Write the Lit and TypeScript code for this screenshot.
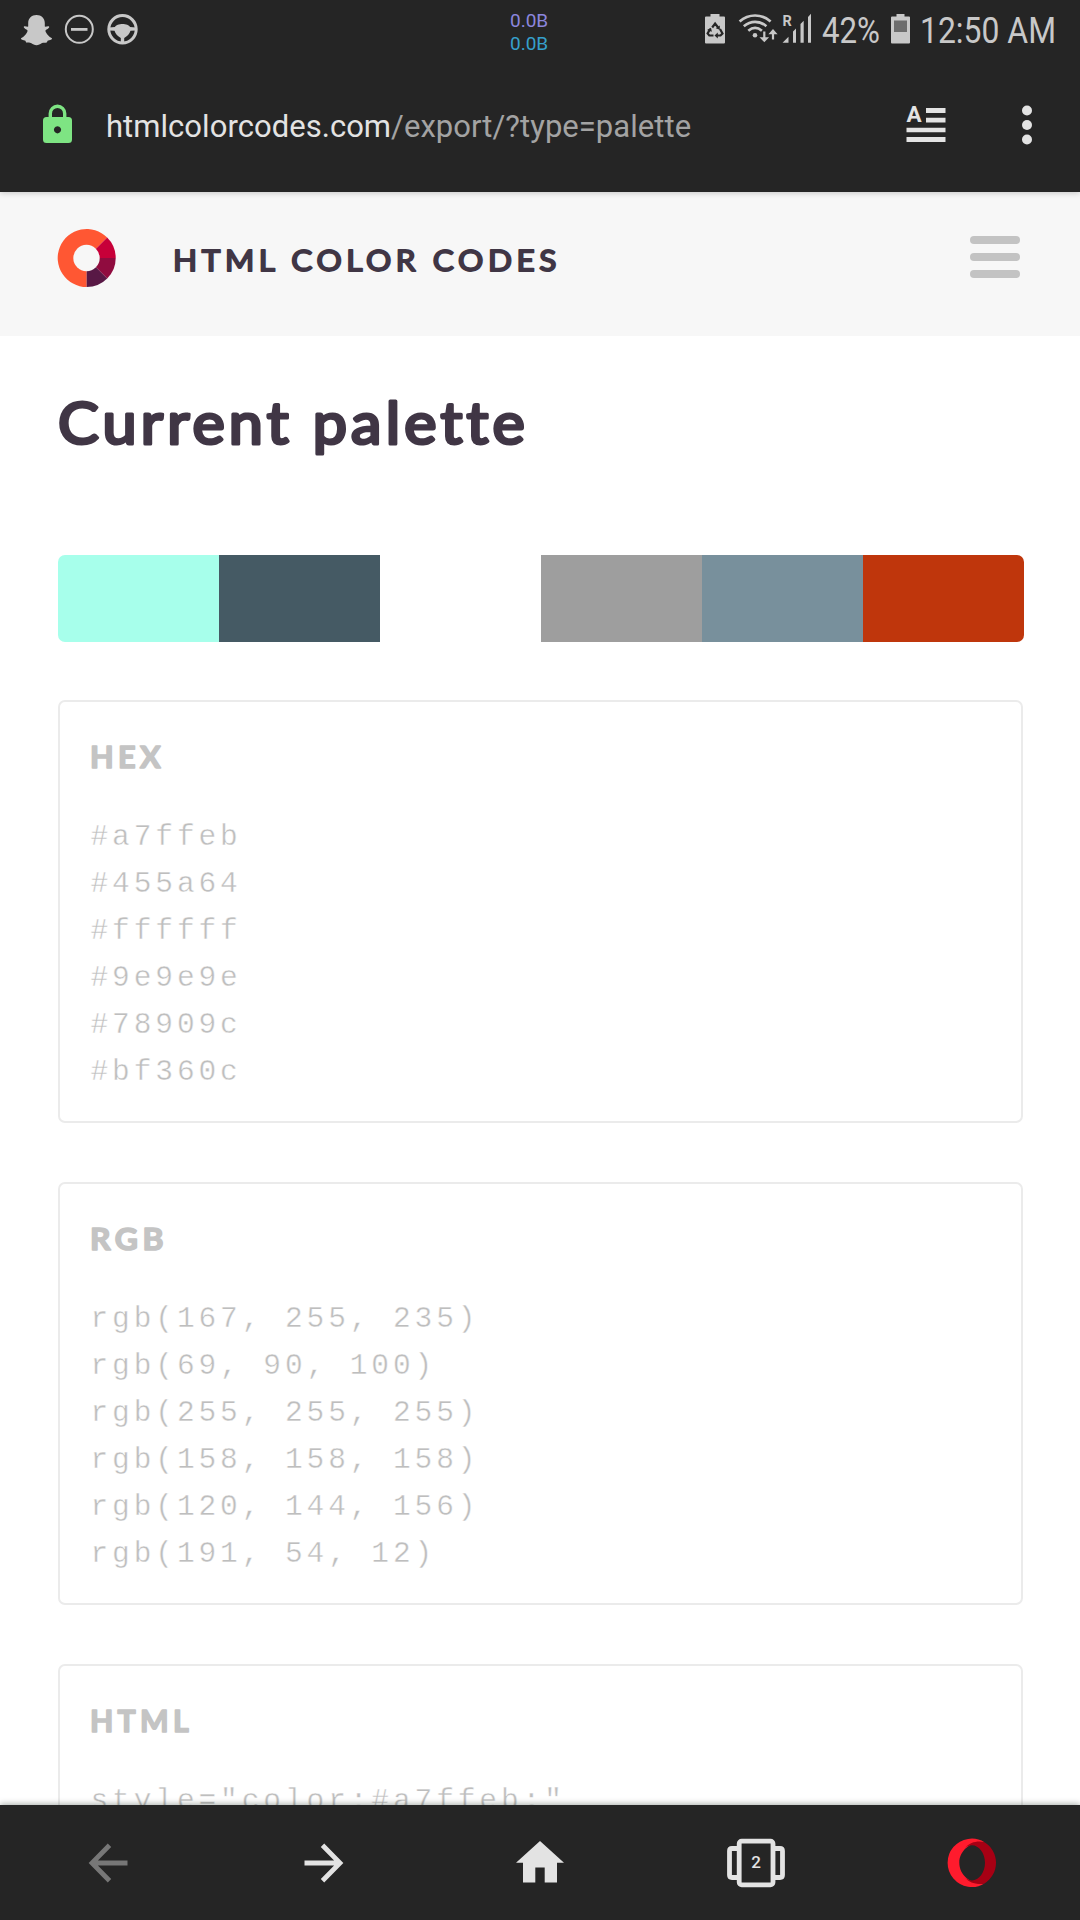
import { LitElement, html, svg, css, SVGTemplateResult } from "lit";
import { customElement, property } from "lit/decorators.js";

const PALETTE = ["#a7ffeb", "#455a64", "#ffffff", "#9e9e9e", "#78909c", "#bf360c"];

const toRgb = (hex: string) =>
  `rgb(${[1, 3, 5].map((i) => parseInt(hex.slice(i, i + 2), 16)).join(", ")})`;

/** An SVG whose user units are page pixels, starting at (x, y). */
const icon = (x: number, y: number, w: number, h: number, body: SVGTemplateResult) => html`
  <svg width=${w} height=${h} viewBox="${x} ${y} ${w} ${h}" fill="currentColor">${body}</svg>
`;

@customElement("soft-text")
class SoftText extends LitElement {
  @property() text = "";
  @property({ type: Number }) size = 30;
  @property({ type: Number }) length = 100;
  @property({ type: Number }) stroke = 2;
  @property({ type: Number }) weight = 400;
  @property({ type: Number }) spacing = 2;

  static styles = css`
    :host { display: block; }
    svg { display: block; overflow: visible; }
    text {
      font-family: Lato, "Open Sans", sans-serif;
      font-variant-ligatures: none;
      fill: currentColor;
      stroke: currentColor;
      stroke-linejoin: round;
    }
  `;

  render() {
    return html`<svg width=${this.length} height=${this.size}>
      ${svg`<text x="0" y=${this.size} font-size=${this.size} font-weight=${this.weight}
        letter-spacing=${this.spacing} stroke-width=${this.stroke}
        textLength=${this.length} lengthAdjust="spacingAndGlyphs">${this.text}</text>`}
    </svg>`;
  }
}

@customElement("status-bar")
class StatusBar extends LitElement {
  static styles = css`
    :host {
      display: flex;
      height: 60px;
      color: #c8c8c8;
      font-family: Roboto, sans-serif;
    }
    svg { display: block; flex: none; overflow: visible; }
    .left { display: flex; padding-left: 20px; gap: 8px; width: 510px; box-sizing: border-box; }
    .speed { font-size: 19px; line-height: 23px; padding-top: 9px; }
    .up { color: #8c86dd; }
    .down { color: #36a0cc; }
    .right { display: flex; margin-left: auto; }
  `;

  render() {
    return html`
      <div class="left">
        ${icon(20, 0, 34, 60, svg`
          <path d="M36.500 15c5 0 8.300 3.300 8.300 8v3.600c1.500.4 3-.9 4.300-.1.700.9-.8 2.300-3 3.300-.9.500-.7 1.500-.2 2.500 1.300 2.600 3.200 4.500 5.700 5.600.7.400.4 1.200-.3 1.600-1.400.8-3 .6-3.700 1.300-.5.600-.2 1.400-1 1.700-1.400.5-3.200-.1-5 .8-1.600.9-3 1.900-5.100 1.900s-3.500-1-5.100-1.900c-1.800-.9-3.600-.3-5-.8-.8-.3-.5-1.100-1-1.700-.7-.7-2.300-.5-3.700-1.300-.7-.4-1-1.200-.3-1.600 2.500-1.100 4.400-3 5.700-5.600.5-1 .7-2-.2-2.500-2.200-1-3.700-2.400-3-3.300 1.300-.8 2.800.5 4.300.1V23c0-4.700 3.300-8 8.300-8z"/>`)}
        ${icon(62, 0, 35, 60, svg`
          <circle cx="79.300" cy="29.300" r="13.500" fill="none" stroke="currentColor" stroke-width="2"/>
          <path d="M71 28h16.500v2.800H71z"/>`)}
        ${icon(105, 0, 35, 60, svg`
          <circle cx="122.500" cy="29.300" r="13.700" fill="none" stroke="currentColor" stroke-width="3"/>
          <path d="M109 27.500l6-.4c1.500-4 13.500-4 15 0l6 .4v3l-5.500.2c-1 3.300-3.200 5.300-6.300 7.300v5h-3.400v-5c-3.100-2-5.300-4-6.300-7.300l-5.500-.2z"/>`)}
      </div>
      <div class="speed"><div class="up">0.0B</div><div class="down">0.0B</div></div>
      <div class="right">
        ${icon(700, 0, 34, 60, svg`
          <path d="M710.500 14h9v2.600h4.500q1 0 1 1V42.500q0 1-1 1h-18q-1 0-1-1V17.600q0-1 1-1h4.500z"/>
          <g fill="none" stroke="#252525" stroke-width="2.200">
            <path d="M712.200 27.500l2.900-4 3 4M720 29l2.500 4.500-2 2h-4M713.500 35.500h-4.200l-1.700-2 2.600-4.500"/>
          </g>
          <path fill="#252525" d="M719.800 25.600v4.200l-4-1.600zM717.800 32.500v6l-3.300-3zM707 30l4-2.200.9 4z"/>`)}
        ${icon(734, 0, 46, 60, svg`
          <g fill="none" stroke="currentColor" stroke-width="2.700">
            <path d="M739.600 21.500c9-8 22-8 31 0M743.800 26.200c7-5.900 15.600-5.900 22.600 0M748.300 30.800c4.300-3.600 9.300-3.600 13.600 0"/>
            <path stroke-width="2.200" d="M764.300 31.500v8M773 32v7.500"/>
          </g>
          <circle cx="755" cy="35.200" r="2.300"/>
          <path d="M759.500 37.200h9.600l-4.800 5zM768.400 34.200h9.200l-4.600-5.200z"/>`)}
        ${icon(780, 0, 34, 60, svg`
          <text x="782.500" y="26" font-size="14.500" font-weight="700">R</text>
          <path d="M782.500 42.700l6-6v6zM793 42.700V31.500l3-3v14.200zM800.500 42.700V24l3.200-3.200v21.900zM808 42.700V17l3-3.200v28.900z"/>`)}
        ${icon(814, 0, 70, 60, svg`
          <text x="822" y="43" font-size="36" textLength="58" lengthAdjust="spacingAndGlyphs">42%</text>`)}
        ${icon(884, 0, 32, 60, svg`
          <path d="M896.500 14h8v2.600h4.500q1 0 1 1V42.500q0 1-1 1h-17q-1 0-1-1V17.600q0-1 1-1h4.500z"/>
          <path fill="#6d6d6d" d="M894 20.500h13V32h-13z"/>`)}
        ${icon(916, 0, 164, 60, svg`
          <text x="920" y="43" font-size="36" textLength="136" lengthAdjust="spacingAndGlyphs">12:50 AM</text>`)}
      </div>
    `;
  }
}

@customElement("address-bar")
class AddressBar extends LitElement {
  static styles = css`
    :host { display: flex; height: 132px; color: #e3e3e3; font-family: Roboto, sans-serif; }
    svg { display: block; flex: none; }
    .lock { color: #7ee483; width: 106px; }
    .url { flex: 1; font-size: 31px; letter-spacing: 0.040px; line-height: 36px; padding-top: 49px; white-space: nowrap; }
    .path { color: #a3a3a3; }
  `;

  render() {
    return html`
      <div class="lock">${icon(0, 60, 105, 132, svg`
        <path fill-rule="evenodd" d="M46.500 117h22q3.500 0 3.500 3.500v19q0 3.500-3.500 3.500h-22q-3.500 0-3.500-3.500v-19q0-3.500 3.500-3.500zM57.500 126.200a3.600 3.600 0 1 0 .01 0z"/>
        <path d="M50.300 118v-4.500a7.200 7.200 0 0 1 14.400 0V118" fill="none" stroke="currentColor" stroke-width="3.400"/>`)}</div>
      <div class="url">htmlcolorcodes.com<span class="path">/export/?type=palette</span></div>
      ${icon(890, 60, 80, 132, svg`
        <text x="906.500" y="122" font-size="22.500" font-weight="700">A</text>
        <path d="M926 108h19.500v5H926zM926 117.800h19.500v4.600H926zM906.500 127.700h39v4.600h-39zM906.500 137h39v5h-39z"/>`)}
      ${icon(970, 60, 110, 132, svg`
        <circle cx="1027" cy="110.500" r="5"/><circle cx="1027" cy="125" r="5"/><circle cx="1027" cy="139.500" r="5"/>`)}
    `;
  }
}

@customElement("nav-bar")
class NavBar extends LitElement {
  static styles = css`
    :host {
      display: grid;
      grid-template-columns: repeat(5, 216px);
      height: 115px;
      background: #252525;
      color: #e3e3e3;
      font-family: Roboto, sans-serif;
      box-shadow: 0 -1px 6px rgba(0, 20, 10, 0.35);
    }
    svg { display: block; }
    .off { color: #777777; }
  `;

  render() {
    return html`
      <div class="off">${icon(0, 1805, 216, 115, svg`
        <path d="M127.500 1863H92M109.500 1845.200L92 1863l17.500 17.800" fill="none" stroke="currentColor" stroke-width="4.800"/>`)}</div>
      <div>${icon(216, 1805, 216, 115, svg`
        <path d="M304.500 1863H340M322.500 1845.200L340 1863l-17.500 17.800" fill="none" stroke="currentColor" stroke-width="4.800"/>`)}</div>
      <div>${icon(432, 1805, 216, 115, svg`
        <path d="M540 1841l24 21.800h-7v19.700h-12.300v-15h-9.400v15H523v-19.700h-7z"/>`)}</div>
      <div>${icon(648, 1805, 216, 115, svg`
        <g fill="none" stroke="currentColor" stroke-width="4.800">
          <rect x="739.200" y="1841.200" width="33.800" height="43.600" rx="2.500"/>
          <path d="M738 1848.500h-6q-2.500 0-2.500 2.500v24q0 2.500 2.500 2.500h6M774 1848.500h6q2.500 0 2.500 2.500v24q0 2.500-2.500 2.500h-6"/>
        </g>
        <text x="756" y="1868" font-size="17" font-weight="500" text-anchor="middle">2</text>`)}</div>
      <div>${icon(864, 1805, 216, 115, svg`
        <path fill="#ff1b2d" d="M984.500 1842.200A24.200 24.200 0 1 0 984.500 1883.400C974 1885.500 959.300 1877 959.300 1862.800S974 1840.100 984.500 1842.200z"/>
        <path fill="#a70014" d="M965 1848C970 1842 978 1840.500 984.500 1842.200A24.200 24.200 0 0 1 984.500 1883.400C978 1885.100 970 1883.600 965 1877.600C967 1879.500 969.500 1880.400 972 1880.400C979 1880.400 985 1872.500 985 1862.800S979 1845.200 972 1845.200C969.500 1845.200 967 1846 965 1848z"/>`)}</div>
    `;
  }
}

@customElement("code-card")
class CodeCard extends LitElement {
  @property() heading = "";
  @property({ type: Number }) headingLength = 70;
  @property({ attribute: false }) lines: string[] = [];

  static styles = css`
    :host {
      display: block;
      box-sizing: border-box;
      height: 423px;
      flex: none;
      border: 2px solid #ebebeb;
      border-radius: 7px;
      padding: 36px 30px 0;
      color: #c4c4c4;
    }
    .lines {
      margin: 46px 0 0 0.500px;
      font: 29.500px/47px "Liberation Mono", monospace;
      letter-spacing: 3.900px;
      white-space: pre;
      color: #bebebe;
      -webkit-text-stroke: 0.400px #ffffff;
    }
  `;

  render() {
    return html`
      <soft-text .text=${this.heading} .size=${29.5} .weight=${700} .stroke=${1.5} .spacing=${4.2} .length=${this.headingLength}></soft-text>
      <div class="lines">${this.lines.map((l) => html`<div>${l}</div>`)}</div>
    `;
  }
}

@customElement("app-root")
class AppRoot extends LitElement {
  static styles = css`
    :host {
      display: flex;
      flex-direction: column;
      width: 1080px;
      height: 1920px;
      overflow: hidden;
      background: #ffffff;
    }
    svg { display: block; }
    .chrome { background: #252525; flex: none; box-shadow: 0 1px 6px rgba(0, 0, 0, 0.2); z-index: 1; }
    .site {
      display: flex;
      align-items: flex-start;
      flex: none;
      height: 144px;
      box-sizing: border-box;
      padding: 36px 60px 0 57px;
      background: #f7f7f7;
      color: #403645;
    }
    .brand { margin: 12.500px 0 0 56px; }
    .menu { display: grid; gap: 9px; margin: 8px 0 0 auto; }
    .bar { width: 50px; height: 8px; border-radius: 4px; background: #c3c3c3; }
    .content {
      flex: 1;
      min-height: 0;
      overflow: hidden;
      display: flex;
      flex-direction: column;
      padding: 50px 57px 0 58px;
    }
    .title { color: #403645; height: 168.500px; flex: none; }
    .swatches { display: flex; flex: none; height: 87.500px; border-radius: 7px; overflow: hidden; margin: 0 -1px 58px 0; }
    .swatch { flex: 1; }
    .swatch:first-child { flex: 0 0 160.500px; }
    .cards { display: flex; flex-direction: column; gap: 59px; }
    nav-bar { flex: none; z-index: 1; }
  `;

  render() {
    return html`
      <div class="chrome"><status-bar></status-bar><address-bar></address-bar></div>
      <div class="site">
        ${icon(57, 228, 60, 60, svg`
          <path fill="#ff5733" d="M86.700 258V287A29 29 0 1 1 107.200 237.500z"/>
          <path fill="#c70039" d="M86.700 258L107.200 237.500A29 29 0 0 1 115.700 258z"/>
          <path fill="#900c3f" d="M86.700 258H115.700A29 29 0 0 1 107.200 278.500z"/>
          <path fill="#581845" d="M86.700 258L107.200 278.500A29 29 0 0 1 86.700 287z"/>
          <circle cx="86.500" cy="258" r="13.200" fill="#f7f7f7"/>`)}
        <soft-text class="brand" .text=${"HTML COLOR CODES"} .size=${29.5} .stroke=${1.9} .spacing=${4.3} .length=${388}></soft-text>
        <div class="menu"><div class="bar"></div><div class="bar"></div><div class="bar"></div></div>
      </div>
      <div class="content">
        <soft-text class="title" .text=${"Current palette"} .size=${58} .stroke=${3.2} .spacing=${4} .length=${471}></soft-text>
        <div class="swatches">
          ${PALETTE.map((c) => html`<div class="swatch" style="background:${c}"></div>`)}
        </div>
        <div class="cards">
          <code-card .heading=${"HEX"} .headingLength=${75} .lines=${PALETTE}></code-card>
          <code-card .heading=${"RGB"} .headingLength=${78} .lines=${PALETTE.map(toRgb)}></code-card>
          <code-card .heading=${"HTML"} .headingLength=${103} .lines=${[`style="color:${PALETTE[0]};"`]}></code-card>
        </div>
      </div>
      <nav-bar></nav-bar>
    `;
  }
}
